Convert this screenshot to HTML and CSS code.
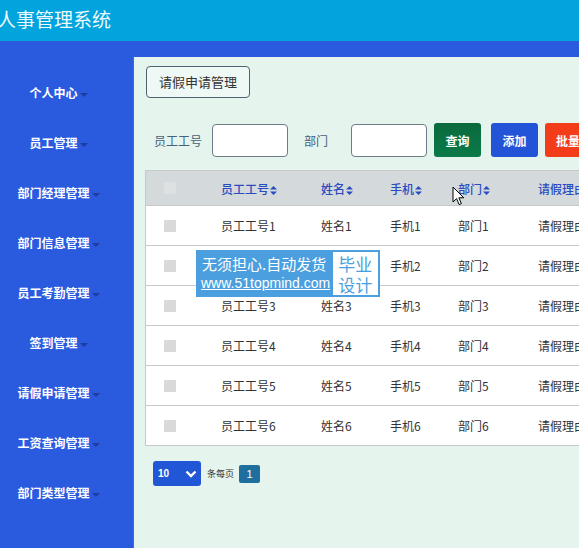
FILE: index.html
```html
<!DOCTYPE html>
<html lang="zh-CN">
<head>
    <meta charset="UTF-8">
    <meta name="viewport" content="width=device-width, initial-scale=1.0">
    <title>人事管理系统</title>
    <link rel="stylesheet" href="styles.css">
</head>
<body>

    <div class="header">人事管理系统</div>

    <div class="layout">
        <ul class="sidebar">
            <li>个人中心<span class="caret"></span></li>
            <li>员工管理<span class="caret"></span></li>
            <li>部门经理管理<span class="caret"></span></li>
            <li>部门信息管理<span class="caret"></span></li>
            <li>员工考勤管理<span class="caret"></span></li>
            <li>签到管理<span class="caret"></span></li>
            <li>请假申请管理<span class="caret"></span></li>
            <li>工资查询管理<span class="caret"></span></li>
            <li>部门类型管理<span class="caret"></span></li>
        </ul>

        <div class="main">
            <div class="tab">请假申请管理</div>

            <div class="search">
                <label class="search-label">员工工号</label>
                <input type="text" class="search-input">
                <label class="search-label label-dept">部门</label>
                <input type="text" class="search-input">
                <button class="btn btn-query">查询</button>
                <button class="btn btn-add">添加</button>
                <button class="btn btn-del">批量删除</button>
            </div>

            <table class="grid">
                <thead>
                    <tr>
                        <th class="col-check"><span class="check check-head"></span></th>
                        <th class="col-no">员工工号<svg class="sort" width="7" height="9" viewBox="0 0 7 9"><path d="M3.5 0L7 3.6H0z M3.5 9L7 5.4H0z" fill="#2a4cc0"/></svg></th>
                        <th class="col-name">姓名<svg class="sort" width="7" height="9" viewBox="0 0 7 9"><path d="M3.5 0L7 3.6H0z M3.5 9L7 5.4H0z" fill="#2a4cc0"/></svg></th>
                        <th class="col-phone">手机<svg class="sort" width="7" height="9" viewBox="0 0 7 9"><path d="M3.5 0L7 3.6H0z M3.5 9L7 5.4H0z" fill="#2a4cc0"/></svg></th>
                        <th class="col-dept">部门<svg class="sort" width="7" height="9" viewBox="0 0 7 9"><path d="M3.5 0L7 3.6H0z M3.5 9L7 5.4H0z" fill="#2a4cc0"/></svg></th>
                        <th class="col-reason">请假理由</th>
                    </tr>
                </thead>
                <tbody>
                    <tr><td><span class="check"></span></td><td>员工工号1</td><td>姓名1</td><td>手机1</td><td>部门1</td><td>请假理由1</td></tr>
                    <tr><td><span class="check"></span></td><td>员工工号2</td><td>姓名2</td><td>手机2</td><td>部门2</td><td>请假理由2</td></tr>
                    <tr><td><span class="check"></span></td><td>员工工号3</td><td>姓名3</td><td>手机3</td><td>部门3</td><td>请假理由3</td></tr>
                    <tr><td><span class="check"></span></td><td>员工工号4</td><td>姓名4</td><td>手机4</td><td>部门4</td><td>请假理由4</td></tr>
                    <tr><td><span class="check"></span></td><td>员工工号5</td><td>姓名5</td><td>手机5</td><td>部门5</td><td>请假理由5</td></tr>
                    <tr><td><span class="check"></span></td><td>员工工号6</td><td>姓名6</td><td>手机6</td><td>部门6</td><td>请假理由6</td></tr>
                </tbody>
            </table>

            <div class="pager">
                <div class="page-size">10
                    <svg width="12" height="8" viewBox="0 0 12 8"><path d="M1.5 1.5L6 6l4.5-4.5" stroke="#fff" stroke-width="2.4" fill="none"/></svg>
                </div>
                <span class="pager-text">条每页</span>
                <span class="page-num">1</span>
            </div>
        </div>
    </div>

    <div class="watermark">
        <div class="wm-left">
            <div class="wm-line1">无须担心.自动发货</div>
            <div class="wm-line2">www.51topmind.com</div>
        </div>
        <div class="wm-right">毕业<br>设计</div>
    </div>

    <svg class="cursor" width="14" height="21" viewBox="0 0 14 21">
        <path d="M1 1L1 16L4.6 12.6L7.2 18.6L9.4 17.6L6.9 11.8L11.8 11.8Z" fill="#fff" stroke="#000" stroke-width="1"/>
    </svg>

</body>
</html>
```

FILE: styles.css
```css
body {
    margin: 0;
    padding: 0;
    font-family: "Noto Sans CJK SC", "Liberation Sans", sans-serif;
    background-color: #2a5bdf;
    width: 579px;
    height: 548px;
    overflow: hidden;
    position: relative;
}

.header {
    height: 41px;
    line-height: 38px;
    background-color: #01a4dc;
    color: #eefaff;
    font-size: 19px;
    text-indent: -3px;
    white-space: nowrap;
}

.layout {
    display: flex;
    height: 507px;
}

.sidebar {
    list-style: none;
    margin: 0;
    padding: 27px 0 0 0;
    width: 133px;
    flex-shrink: 0;
    background-color: #2a5bdf;
}

.sidebar li {
    height: 50px;
    line-height: 50px;
    text-align: center;
    padding-right: 16px;
    color: #fff;
    font-size: 12px;
    font-weight: bold;
}

.caret {
    display: inline-block;
    width: 0;
    height: 0;
    margin-left: 2px;
    vertical-align: middle;
    border-left: 4px solid transparent;
    border-right: 4px solid transparent;
    border-top: 4px solid #1c3e9e;
}

.main {
    flex: 1;
    margin-top: 16px;
    border-left: 1px solid #3c6be0;
    background-color: #e5f4ed;
    padding: 9px 0 0 12px;
    overflow: hidden;
}

.tab {
    display: inline-block;
    box-sizing: border-box;
    height: 32px;
    line-height: 30px;
    padding: 0 12px;
    border: 1px solid #4d6470;
    border-radius: 4px;
    background-color: #eef8f4;
    font-size: 13px;
    color: #333;
}

.search {
    display: flex;
    align-items: center;
    margin-top: 25px;
    height: 34px;
    white-space: nowrap;
}

.search-label {
    font-size: 12px;
    color: #45617e;
    margin-left: 8px;
    margin-right: 10px;
}

.label-dept {
    margin-left: 16px;
    margin-right: 23px;
}

.search-input {
    box-sizing: border-box;
    width: 76px;
    height: 33px;
    border: 1px solid #6c7d88;
    border-radius: 4px;
    background-color: #fff;
    margin: 0;
}

.btn {
    box-sizing: border-box;
    flex-shrink: 0;
    height: 34px;
    width: 47px;
    padding: 0;
    border: none;
    border-radius: 3px;
    color: #fff;
    font-family: inherit;
    font-size: 12px;
    font-weight: bold;
    margin-left: 7px;
}

.btn-query {
    background: linear-gradient(#0a6a3e, #0b7a48);
}

.btn-add {
    background-color: #2353d6;
    margin-left: 10px;
}

.btn-del {
    background-color: #f23c1a;
    margin-left: 7px;
    width: 70px;
}

.grid {
    margin-top: 13px;
    margin-left: -1px;
    border-collapse: collapse;
    table-layout: fixed;
    width: 592px;
    background-color: #fff;
    border-left: 1px solid #c6c9ca;
    border-bottom: 1px solid #c6c9ca;
}

.grid th {
    height: 34px;
    background-color: #d4d9db;
    color: #2a4cc0;
    font-size: 12px;
    font-weight: 500;
    text-align: left;
    padding: 0 0 0 20px;
    white-space: nowrap;
    border-top: 1px solid #c6c9ca;
}

.grid td {
    height: 39px;
    border-top: 1px solid #c6c9ca;
    font-size: 12px;
    color: #333;
    padding: 0 0 0 20px;
    white-space: nowrap;
}

.grid .col-check {
    width: 37px;
    padding-left: 18px;
}

.grid tr td:first-child {
    padding-left: 18px;
}

.col-no { width: 80px; }
.col-name { width: 49px; }
.col-phone { width: 48px; }
.col-dept { width: 60px; }
.col-reason { width: 200px; }

.sort {
    margin-left: 1px;
    vertical-align: -1px;
}

.check {
    display: block;
    width: 12px;
    height: 12px;
    background-color: #d9d9d9;
}

.check-head {
    background-color: #dde1e2;
}

.pager {
    display: flex;
    align-items: center;
    margin-top: 15px;
    margin-left: 7px;
}

.page-size {
    box-sizing: border-box;
    width: 48px;
    height: 25px;
    border-radius: 3px;
    background-color: #2156d6;
    color: #fff;
    font-family: "Liberation Sans", sans-serif;
    font-size: 10px;
    font-weight: bold;
    display: flex;
    align-items: center;
    justify-content: space-between;
    padding: 0 4px 0 5px;
}

.pager-text {
    font-size: 9px;
    color: #333;
    margin-left: 6px;
}

.page-num {
    margin-left: 5px;
    width: 21px;
    height: 18px;
    line-height: 18px;
    border-radius: 2px;
    background-color: #1f6f9e;
    color: #fff;
    font-family: "Liberation Sans", sans-serif;
    font-size: 11px;
    text-align: center;
}

.watermark {
    position: absolute;
    left: 196px;
    top: 250px;
    width: 184px;
    height: 47px;
    display: flex;
    background-color: #4c9fde;
}

.wm-left {
    width: 135px;
    padding-left: 6px;
    color: #fff;
}

.wm-line1 {
    font-size: 15px;
    line-height: 18px;
    margin-top: 5px;
    white-space: nowrap;
}

.wm-line2 {
    font-family: "Liberation Sans", sans-serif;
    font-size: 14px;
    line-height: 17px;
    text-decoration: underline;
    margin-top: 2px;
    margin-left: -1px;
    white-space: nowrap;
}

.wm-right {
    box-sizing: border-box;
    width: 47px;
    margin: 2px 2px 2px 0;
    background-color: #fff;
    color: #4c9fde;
    font-size: 17px;
    line-height: 21px;
    text-align: center;
    padding-top: 1px;
}

.cursor {
    position: absolute;
    left: 452px;
    top: 186px;
}
```
